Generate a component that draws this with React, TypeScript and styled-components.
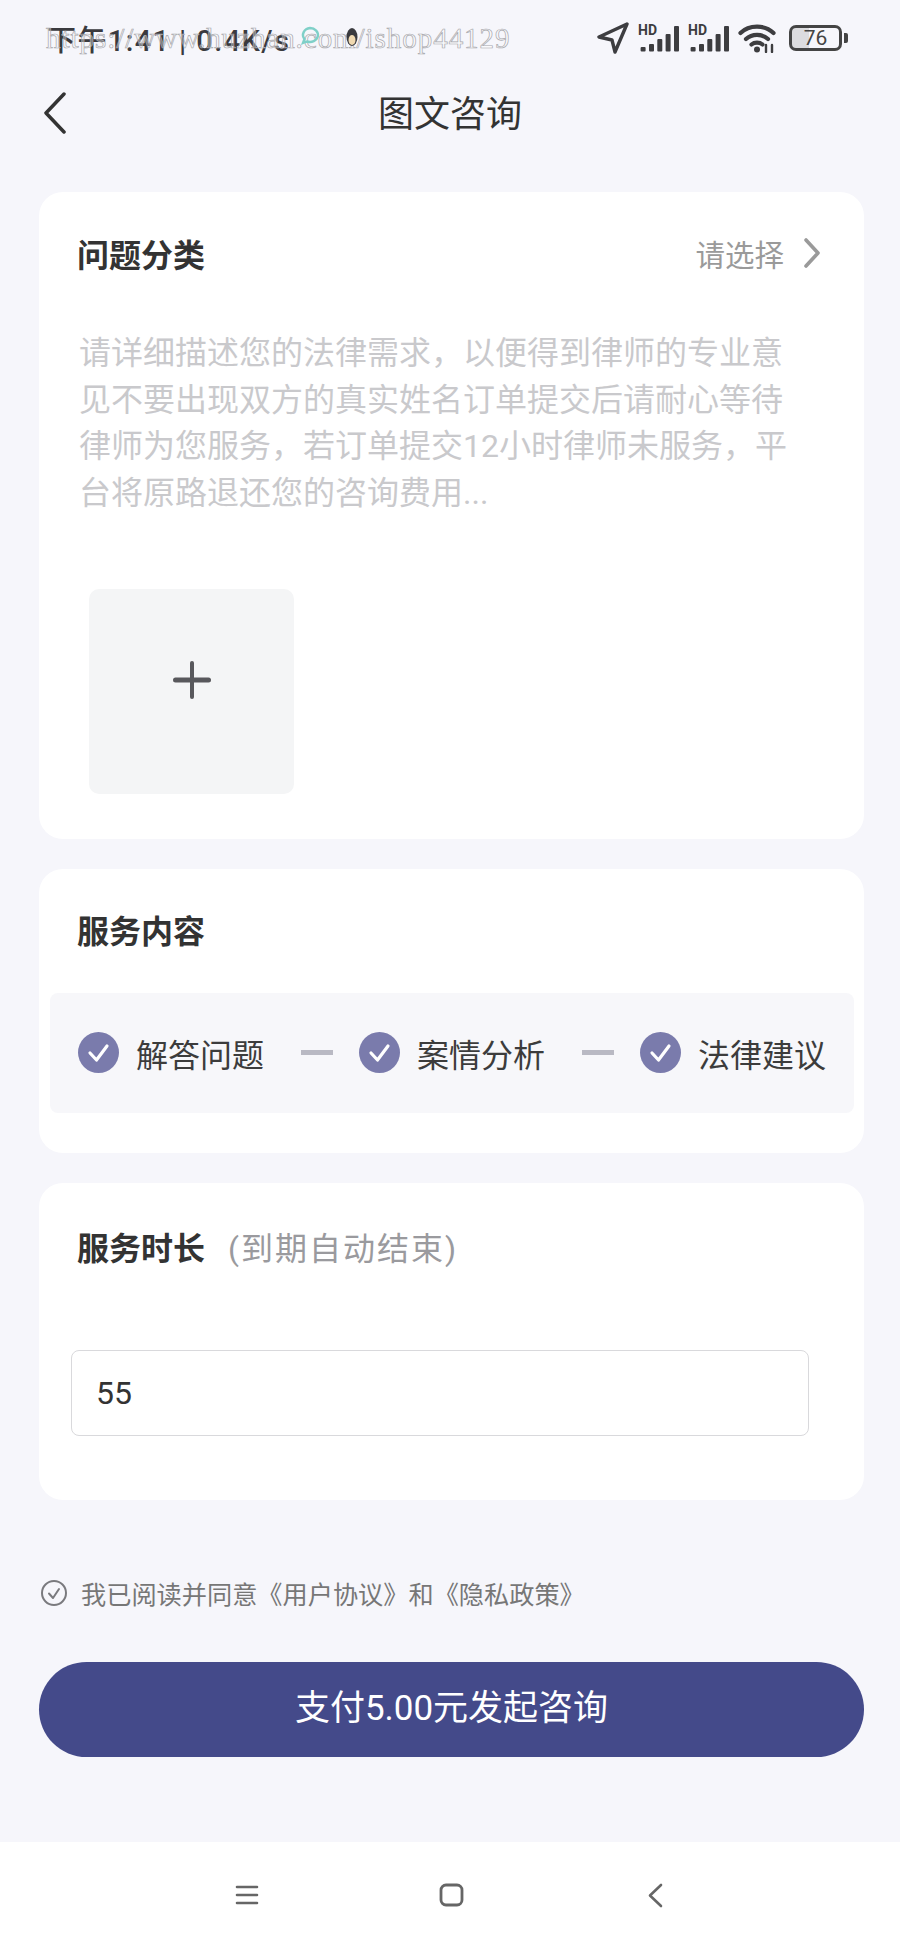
import React from "react";
import styled, { createGlobalStyle } from "styled-components";

const GlobalStyle = createGlobalStyle`
  html, body {
    margin: 0;
    padding: 0;
    background: #f6f6fb;
  }
  * {
    box-sizing: border-box;
  }
`;

const Page = styled.div`
  position: relative;
  display: flex;
  flex-direction: column;
  width: 900px;
  height: 1950px;
  overflow: hidden;
  background: #f6f6fb;
  color: #333;
  font-family: Roboto, "Noto Sans CJK SC", sans-serif;
`;

const StatusBar = styled.div`
  position: relative;
  display: flex;
  align-items: center;
  justify-content: space-between;
  height: 76px;
  padding: 0 52px 0 47px;
`;

const StatusLeft = styled.div`
  display: flex;
  align-items: center;
`;

const Clock = styled.span`
  font-size: 29px;
  font-weight: 500;
  letter-spacing: 1.4px;
  color: #3a3a3e;
`;

const Watermark = styled.span`
  position: absolute;
  left: 46px;
  top: 18px;
  font-family: "Liberation Serif", serif;
  font-size: 29px;
  letter-spacing: 0.95px;
  line-height: 40px;
  color: rgba(255, 255, 255, 0.35);
  -webkit-text-stroke: 0.7px #a8a8ac;
  white-space: nowrap;
`;

const NotifyIcons = styled.div`
  position: absolute;
  left: 300px;
  top: 26px;
  display: flex;
  align-items: center;
  gap: 26px;
`;

const StatusRight = styled.div`
  display: flex;
  align-items: center;
  gap: 9px;
`;

const Battery = styled.div`
  display: flex;
  align-items: center;
  gap: 2px;
  margin-left: 4px;
`;

const BatteryBody = styled.div`
  display: flex;
  align-items: center;
  justify-content: center;
  width: 53px;
  height: 26px;
  border: 3px solid #444;
  border-radius: 7px;
  background: linear-gradient(90deg, #dcdcdf 0 36%, transparent 36%);
  font-size: 21px;
  line-height: 1;
  color: #444;
`;

const BatteryTip = styled.div`
  width: 4px;
  height: 10px;
  border-radius: 0 2px 2px 0;
  background: #444;
`;

const NavBar = styled.div`
  display: grid;
  grid-template-columns: 1fr auto 1fr;
  align-items: center;
  height: 73px;
  margin-bottom: 43px;
  padding: 0 43px;
`;

const NavTitle = styled.div`
  padding-bottom: 3px;
  font-size: 36px;
  color: #333;
`;

const Card = styled.section`
  margin: 0 36px 30px 39px;
  background: #fff;
  border-radius: 24px;
`;

const CardHead = styled.div<{ $height: number }>`
  display: flex;
  align-items: center;
  justify-content: space-between;
  height: ${(p) => p.$height}px;
  padding: 0 44px 4px 38px;
`;

const HeadGroup = styled.div`
  display: flex;
  align-items: baseline;
  gap: 23px;
`;

const CardTitle = styled.h2`
  margin: 0;
  font-size: 32px;
  font-weight: 700;
  color: #333;
`;

const TitleNote = styled.span`
  font-size: 32px;
  letter-spacing: 2px;
  color: #9a9a9e;
`;

const Picker = styled.div`
  display: flex;
  align-items: center;
  gap: 20px;
  font-size: 29.500px;
  color: #9a9a9a;
`;

const Hint = styled.p`
  width: 720px;
  margin: 12px 0 0 40px;
  font-size: 32px;
  line-height: 46.7px;
  color: #c9c9cc;
`;

const UploadBox = styled.div`
  display: flex;
  align-items: center;
  justify-content: center;
  width: 205px;
  height: 205px;
  margin: 72px 0 45px 50px;
  padding-bottom: 22px;
  border-radius: 10px;
  background: #f4f5f6;
`;

const StepBand = styled.div`
  display: flex;
  align-items: center;
  height: 120px;
  margin: 0 10px 40px 11px;
  padding-left: 28px;
  border-radius: 8px;
  background: #f7f7fa;
`;

const Step = styled.div`
  display: flex;
  align-items: center;
  gap: 17px;
  font-size: 32px;
  color: #3c3c3c;
`;

const StepDash = styled.div`
  width: 32px;
  height: 5px;
  margin: 0 26px 0 37px;
  background: #b9b9c3;
`;

const DurationInput = styled.input`
  display: block;
  width: 738px;
  height: 86px;
  margin: 37px 0 64px 32px;
  padding: 0 24px;
  border: 1.5px solid #d9d9dc;
  border-radius: 8px;
  background: #fff;
  font-family: Roboto, "Noto Sans CJK SC", sans-serif;
  font-size: 32px;
  color: #333;
`;

const Agreement = styled.div`
  display: flex;
  align-items: center;
  gap: 14px;
  margin: 45px 0 0 41px;
  font-size: 25.200px;
  color: #777;
`;

const PayButton = styled.button`
  display: block;
  width: 825px;
  height: 95px;
  margin: 51px 0 0 39px;
  padding: 0 0 9px;
  border: 0;
  border-radius: 48px;
  background: #444a8a;
  font-family: Roboto, "Noto Sans CJK SC", sans-serif;
  font-size: 35px;
  color: #fff;
`;

const NavKeys = styled.div`
  display: flex;
  align-items: center;
  justify-content: center;
  height: 108px;
  margin-top: auto;
  padding: 0 0 2px 2px;
  background: #fff;
`;

const NavKey = styled.div`
  display: flex;
  justify-content: center;
  width: 204px;
`;

const BackIcon = () => (
  <svg width="24" height="42" viewBox="0 0 24 42" fill="none" stroke="#333" strokeWidth="3.5" strokeLinecap="round" strokeLinejoin="round">
    <path d="M21 2 3 21l18 19" />
  </svg>
);

const LocationIcon = () => (
  <svg width="32" height="32" viewBox="0 0 32 32" fill="none" stroke="#3d3d40" strokeWidth="3.4" strokeLinejoin="round">
    <path d="M30 2 2 15l13 3 3 12z" />
  </svg>
);

const SignalIcon = () => (
  <svg width="41" height="28" viewBox="0 0 41 28" fill="#3d3d40" overflow="visible">
    <text x="0" y="10.500" fontFamily="Roboto, sans-serif" fontSize="14" fontWeight="700">HD</text>
    <rect x="2.600" y="23" width="5" height="4.500" rx="1" />
    <rect x="11" y="20" width="5" height="7.500" rx="1" />
    <rect x="19.300" y="15" width="5" height="12.500" rx="1" />
    <rect x="27.600" y="10" width="5" height="17.500" rx="1" />
    <rect x="36" y="2" width="5" height="25.500" rx="1" />
  </svg>
);

const WifiIcon = () => (
  <svg width="38" height="30" viewBox="0 0 38 30" fill="none" stroke="#3d3d40" strokeWidth="4.200" strokeLinecap="round">
    <path d="M2.500 10C11 1.500 27 1.500 35.500 10" />
    <path d="M8 16C14 10.500 24 10.500 30 16" />
    <path d="M13.500 21.500C16.500 19 21.500 19 24.500 21.500" />
    <circle cx="19" cy="26.500" r="3" fill="#3d3d40" stroke="none" />
    <path d="M28 22v7M34 22v7" strokeWidth="2.400" />
  </svg>
);

const ChevronRight = () => (
  <svg width="16" height="30" viewBox="0 0 16 30" fill="none" stroke="#9a9a9a" strokeWidth="3.6" strokeLinecap="round" strokeLinejoin="round">
    <path d="M2 2l12 13L2 28" />
  </svg>
);

const PlusIcon = () => (
  <svg width="38" height="38" viewBox="0 0 38 38" fill="#58585c">
    <rect x="0" y="16.500" width="38" height="5" rx="2.500" />
    <rect x="17" y="0" width="4" height="38" rx="2" />
  </svg>
);

const StepCheck = () => (
  <svg width="41" height="41" viewBox="0 0 41 41">
    <circle cx="20.5" cy="20.5" r="20.5" fill="#7a7bac" />
    <path d="M12 21l6.5 7L29 14" fill="none" stroke="#fff" strokeWidth="3.2" strokeLinecap="round" strokeLinejoin="round" />
  </svg>
);

const AgreeCheck = () => (
  <svg width="26" height="26" viewBox="0 0 26 26" fill="none" stroke="#7a7a7e" strokeWidth="2">
    <circle cx="13" cy="13" r="12" />
    <path d="M8 13.5l4 4.5 6-9" strokeLinecap="round" strokeLinejoin="round" />
  </svg>
);

const steps = ["解答问题", "案情分析", "法律建议"];

export default function App() {
  return (
    <Page>
      <GlobalStyle />
      <StatusBar>
        <StatusLeft>
          <Clock>下午1:41 | 0.4K/s</Clock>
        </StatusLeft>
        <Watermark>https://www.huzhan.com/ishop44129</Watermark>
        <NotifyIcons>
          <svg width="20" height="22" viewBox="0 0 20 22" fill="none" stroke="#7fd0c8" strokeWidth="2.4">
            <path d="M10 2a8 7 0 1 1-3 13.500L3 17l1.500-4A8 7 0 0 1 10 2z" />
          </svg>
          <svg width="12" height="20" viewBox="0 0 12 20">
            <ellipse cx="6" cy="10" rx="5.500" ry="9" fill="#3a3a3e" />
            <ellipse cx="6" cy="13" rx="3.500" ry="5" fill="#f0d9b0" />
          </svg>
        </NotifyIcons>
        <StatusRight>
          <LocationIcon />
          <SignalIcon />
          <SignalIcon />
          <WifiIcon />
          <Battery>
            <BatteryBody>76</BatteryBody>
            <BatteryTip />
          </Battery>
        </StatusRight>
      </StatusBar>

      <NavBar>
        <BackIcon />
        <NavTitle>图文咨询</NavTitle>
      </NavBar>

      <Card>
        <CardHead $height={126}>
          <CardTitle>问题分类</CardTitle>
          <Picker>
            请选择
            <ChevronRight />
          </Picker>
        </CardHead>
        <Hint>
          请详细描述您的法律需求，以便得到律师的专业意见不要出现双方的真实姓名订单提交后请耐心等待律师为您服务，若订单提交12小时律师未服务，平台将原路退还您的咨询费用...
        </Hint>
        <UploadBox>
          <PlusIcon />
        </UploadBox>
      </Card>

      <Card>
        <CardHead $height={124}>
          <CardTitle>服务内容</CardTitle>
        </CardHead>
        <StepBand>
          {steps.map((step, i) => (
            <React.Fragment key={step}>
              {i > 0 && <StepDash />}
              <Step>
                <StepCheck />
                {step}
              </Step>
            </React.Fragment>
          ))}
        </StepBand>
      </Card>

      <Card>
        <CardHead $height={130}>
          <HeadGroup>
            <CardTitle>服务时长</CardTitle>
            <TitleNote>(到期自动结束)</TitleNote>
          </HeadGroup>
        </CardHead>
        <DurationInput defaultValue="55" />
      </Card>

      <Agreement>
        <AgreeCheck />
        我已阅读并同意《用户协议》和《隐私政策》
      </Agreement>

      <PayButton>支付5.00元发起咨询</PayButton>

      <NavKeys>
        <NavKey>
          <svg width="24" height="22" viewBox="0 0 24 22" fill="none" stroke="#666" strokeWidth="2.6" strokeLinecap="round">
            <path d="M2 3h20M2 11h20M2 19h20" />
          </svg>
        </NavKey>
        <NavKey>
          <svg width="25" height="24" viewBox="0 0 25 24" fill="none" stroke="#666" strokeWidth="2.8">
            <rect x="2" y="2" width="21" height="20" rx="5" />
          </svg>
        </NavKey>
        <NavKey>
          <svg width="15" height="25" viewBox="0 0 15 25" fill="none" stroke="#666" strokeWidth="2.6" strokeLinecap="round" strokeLinejoin="round">
            <path d="M13 2 2 12.500 13 23" />
          </svg>
        </NavKey>
      </NavKeys>
    </Page>
  );
}
